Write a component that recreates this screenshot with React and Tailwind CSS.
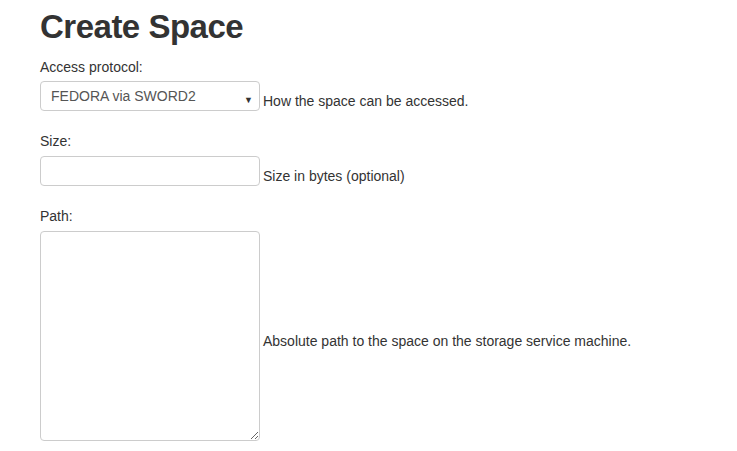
export default function App() {
  return (
    <div className="min-h-[451px] bg-white px-10 text-[14px] leading-5 text-[#333]" style={{ fontFamily: '"Liberation Sans", Arial, sans-serif' }}>
      <h1 className="pt-[7px] text-[33px] font-bold leading-[40px] tracking-[-0.5px]">Create Space</h1>

      <div className="mt-[10px]">
        <label className="block">Access protocol:</label>
        <div className="mt-[4px] flex items-end">
          <div className="relative h-[30px] w-[220px] rounded-[4px] border border-[#ccc] bg-white">
            <select className="h-full w-full appearance-none bg-transparent pl-[10px] text-[14px] text-[#555] outline-none">
              <option>FEDORA via SWORD2</option>
            </select>
            <span className="pointer-events-none absolute right-[6px] top-[8px] text-[9px] text-[#333]">▼</span>
          </div>
          <span className="ml-[3px] leading-5">How the space can be accessed.</span>
        </div>
      </div>

      <div className="mt-[20px]">
        <label className="block">Size:</label>
        <div className="mt-[5px] flex items-end">
          <input className="h-[30px] w-[220px] rounded-[4px] border border-[#ccc] bg-white px-[10px] outline-none" />
          <span className="ml-[3px] leading-5">Size in bytes (optional)</span>
        </div>
      </div>

      <div className="mt-[20px]">
        <label className="block">Path:</label>
        <div className="mt-[5px] flex items-center">
          <textarea className="h-[210px] w-[220px] rounded-[4px] border border-[#ccc] bg-white px-[10px] outline-none" />
          <span className="ml-[3px] pt-[9px] leading-5">Absolute path to the space on the storage service machine.</span>
        </div>
      </div>
    </div>
  )
}
